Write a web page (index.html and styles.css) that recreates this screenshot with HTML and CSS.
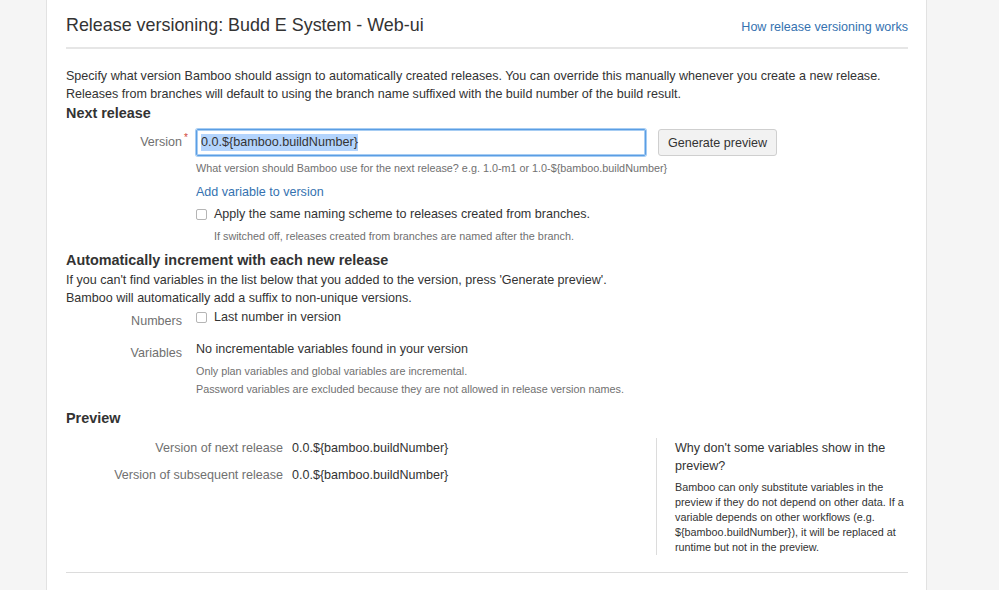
FILE: index.html
```html
<!DOCTYPE html>
<html lang="en">
<head>
<meta charset="utf-8">
<title>Release versioning</title>
<link rel="stylesheet" href="styles.css">
</head>
<body>
<div class="page">
  <header class="page-header">
    <h1 class="title">Release versioning: Budd E System - Web-ui</h1>
    <a class="link help-link" href="#">How release versioning works</a>
  </header>

  <p class="intro">Specify what version Bamboo should assign to automatically created releases. You can override this manually whenever you create a new release.<br>Releases from branches will default to using the branch name suffixed with the build number of the build result.</p>

  <h2 class="section-title">Next release</h2>

  <div class="field-row version-row">
    <label class="field-label">Version<span class="req">*</span></label>
    <div class="field-body">
      <div class="input-line">
        <div class="text-input"><span class="sel">0.0.${bamboo.buildNumber}</span></div>
        <button class="btn">Generate preview</button>
      </div>
      <div class="help">What version should Bamboo use for the next release? e.g. 1.0-m1 or 1.0-${bamboo.buildNumber}</div>
      <a class="link add-var" href="#">Add variable to version</a>
      <div class="check-line">
        <span class="checkbox"></span>
        <span>Apply the same naming scheme to releases created from branches.</span>
      </div>
      <div class="help indent">If switched off, releases created from branches are named after the branch.</div>
    </div>
  </div>

  <h2 class="section-title auto-title">Automatically increment with each new release</h2>
  <p class="desc">If you can't find variables in the list below that you added to the version, press 'Generate preview'.<br>Bamboo will automatically add a suffix to non-unique versions.</p>

  <div class="field-row numbers-row">
    <label class="field-label">Numbers</label>
    <div class="field-body">
      <div class="check-line first-check">
        <span class="checkbox"></span>
        <span>Last number in version</span>
      </div>
    </div>
  </div>

  <div class="field-row variables-row">
    <label class="field-label">Variables</label>
    <div class="field-body">
      <div class="plain">No incrementable variables found in your version</div>
      <div class="help tight">Only plan variables and global variables are incremental.</div>
      <div class="help tight">Password variables are excluded because they are not allowed in release version names.</div>
    </div>
  </div>

  <h2 class="section-title preview-title">Preview</h2>

  <div class="preview">
    <div class="preview-rows">
      <div class="preview-row">
        <span class="preview-label">Version of next release</span>
        <span class="preview-value">0.0.${bamboo.buildNumber}</span>
      </div>
      <div class="preview-row">
        <span class="preview-label">Version of subsequent release</span>
        <span class="preview-value">0.0.${bamboo.buildNumber}</span>
      </div>
    </div>
    <aside class="preview-note">
      <h3 class="note-title">Why don't some variables show in the preview?</h3>
      <p class="note-text">Bamboo can only substitute variables in the preview if they do not depend on other data. If a variable depends on other workflows (e.g. ${bamboo.buildNumber}), it will be replaced at runtime but not in the preview.</p>
    </aside>
  </div>

  <hr class="rule bottom-rule">
</div>
</body>
</html>
```

FILE: styles.css
```css
html, body {
  margin: 0;
  padding: 0;
}
body {
  background: #f5f5f5;
  font-family: "Liberation Sans", Arial, Helvetica, sans-serif;
  font-size: 12.55px;
  color: #333;
  height: 590px;
  overflow: hidden;
}
.page {
  margin-left: 46px;
  width: 842px;
  min-height: 590px;
  background: #fff;
  border-left: 1px solid #e2e2e2;
  border-right: 1px solid #e2e2e2;
  padding: 0 18px 0 19px;
}
.page-header {
  display: flex;
  justify-content: space-between;
  align-items: baseline;
  padding-top: 13px;
  padding-bottom: 10px;
  border-bottom: 2px solid #e6e6e6;
}
.title {
  margin: 0;
  font-size: 17.9px;
  font-weight: normal;
  line-height: 24px;
  color: #333;
}
.link {
  color: #3572b0;
  text-decoration: none;
}
.help-link {
  font-size: 12.55px;
}
.intro {
  margin: 18px 0 0;
  line-height: 18px;
}
.section-title {
  margin: 0;
  font-size: 14.4px;
  font-weight: bold;
  line-height: 20px;
  color: #333;
}
.field-row {
  display: flex;
}
.field-label {
  width: 116px;
  padding-right: 14px;
  text-align: right;
  color: #707070;
  position: relative;
  flex-shrink: 0;
}
.req {
  position: absolute;
  right: 8px;
  top: 4px;
  color: #d04437;
  font-size: 10px;
  line-height: 10px;
}
.version-row {
  margin-top: 6px;
}
.version-row .field-label {
  line-height: 27px;
}
.field-body {
  flex: 1;
}
.input-line {
  display: flex;
  gap: 12px;
  align-items: center;
}
.text-input {
  box-sizing: border-box;
  width: 450px;
  height: 27px;
  border: 1px solid #5b9ee4;
  border-radius: 2px;
  box-shadow: 0 0 0 1px #a7cdf3, inset 0 0 0 1px #a7cdf3;
  padding: 0 4px;
  line-height: 25px;
  font-size: 12.6px;
  color: #333;
}
.sel {
  background: #b3d4fd;
  padding: 1px 0 2px;
}
.btn {
  box-sizing: border-box;
  height: 27px;
  width: 119px;
  padding: 0;
  background: #f2f2f2;
  border: 1px solid #cfcfcf;
  border-radius: 3px;
  font-family: inherit;
  font-size: 12.55px;
  color: #333;
}
.help {
  font-size: 10.8px;
  color: #707070;
  line-height: 15px;
}
.version-row .help {
  margin-top: 5px;
}
.add-var {
  display: block;
  margin-top: 8px;
  line-height: 16px;
}
.check-line {
  display: flex;
  align-items: center;
  gap: 7px;
  margin-top: 6px;
  line-height: 16px;
}
.checkbox {
  box-sizing: border-box;
  width: 11px;
  height: 11px;
  border: 1px solid #b5b5b5;
  border-radius: 2px;
  background: #fff;
  flex-shrink: 0;
}
.help.indent {
  margin-left: 18px;
  margin-top: 7px;
}
.auto-title {
  margin-top: 6px;
}
.desc {
  margin: 1px 0 0;
  line-height: 18px;
}
.numbers-row .field-label {
  line-height: 18px;
  padding-top: 5px;
}
.first-check {
  margin-top: 2px;
}
.variables-row {
  margin-top: 10px;
}
.variables-row .field-label {
  line-height: 18px;
  padding-top: 4px;
}
.plain {
  line-height: 18px;
}
.help.tight {
  line-height: 18px;
}
.variables-row .plain + .help {
  margin-top: 4px;
}
.preview-title {
  margin-top: 10px;
}
.preview {
  display: flex;
  margin-top: 10px;
}
.preview-rows {
  flex: 1;
  padding-top: 1px;
}
.preview-row {
  display: flex;
  line-height: 18px;
  margin-bottom: 9px;
}
.preview-label {
  width: 217px;
  padding-right: 9px;
  text-align: right;
  color: #707070;
  flex-shrink: 0;
}
.preview-note {
  width: 233px;
  border-left: 1px solid #dcdcdc;
  padding-left: 18px;
}
.note-title {
  margin: 0;
  font-size: 12.55px;
  font-weight: normal;
  line-height: 18px;
  color: #333;
  padding-top: 1px;
}
.note-text {
  margin: 5px 0 0;
  font-size: 10.8px;
  line-height: 15px;
  color: #333;
}
.rule {
  border: 0;
  height: 1px;
  background: #dcdcdc;
  margin: 0;
}
.bottom-rule {
  margin-top: 17px;
}
```
